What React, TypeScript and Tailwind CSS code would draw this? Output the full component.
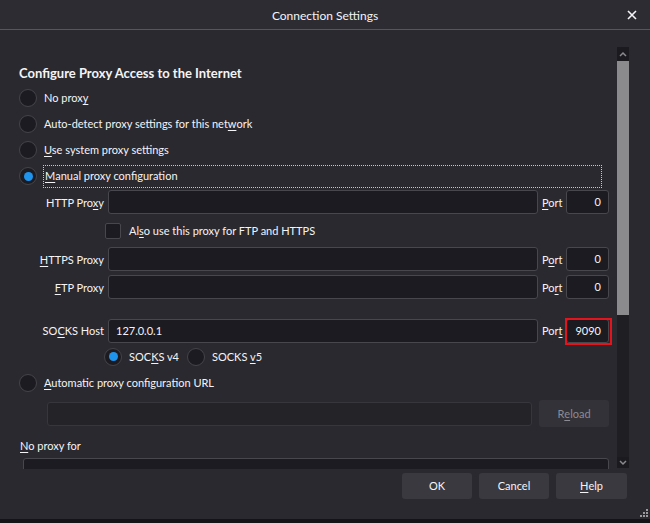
import React from 'react';

const FONT = { fontFamily: 'Lato, "Noto Sans", sans-serif' };

function U({ children }: { children: React.ReactNode }) {
  return <span className="underline underline-offset-2 decoration-1">{children}</span>;
}

function Radio({ checked = false }: { checked?: boolean }) {
  return (
    <span className="flex h-[18px] w-[18px] shrink-0 items-center justify-center rounded-full border border-[#45444b] bg-[#1c1b22]">
      {checked && <span className="h-[9px] w-[9px] rounded-full bg-[#1f94ec]" />}
    </span>
  );
}

function Field({ width, value, align = 'left', disabled = false }: { width: string; value?: string; align?: 'left' | 'right'; disabled?: boolean }) {
  return (
    <div
      className={`${width} h-[24px] flex items-center rounded-[3px] border px-[7px] pt-[1px] ${
        disabled ? 'border-[#37363c] bg-[#242328]' : 'border-[#48474e] bg-[#1c1b22]'
      } ${align === 'right' ? 'justify-end' : ''}`}
    >
      {value}
    </div>
  );
}

function ProxyRow({ label, port, value, red = false }: { label: React.ReactNode; port: React.ReactNode; value?: string; red?: boolean }) {
  return (
    <div className="flex h-[24px] items-center">
      <div className="w-[104px] pt-[2px] text-right">{label}</div>
      <div className="ml-[4px]">
        <Field width="w-[430px]" value={value} />
      </div>
      <div className="ml-[4px] w-[24px] pt-[2px]">{port}</div>
      <div className="relative">
        <Field width="w-[43px]" value={red ? '9090' : '0'} align="right" />
        {red && <div className="absolute -left-[1px] -top-[1px] h-[27px] w-[47px] border-2 border-[#e5141c]" />}
      </div>
    </div>
  );
}

export default function App() {
  return (
    <div className="flex h-[523px] w-[650px] flex-col bg-[#2a292f] text-[11px] text-[#f4f4f6]" style={FONT}>
      <div className="relative flex h-[30px] shrink-0 items-center justify-center border-b border-[#57565c] bg-[#2d2c32] pt-[3px] text-[12px]">
        Connection Settings
        <svg className="absolute right-[13px] top-[10px]" width="10" height="10" viewBox="0 0 10 10">
          <path d="M1 1 L9 9 M9 1 L1 9" stroke="#f4f4f6" strokeWidth="1.6" />
        </svg>
      </div>

      <div className="flex h-[439px] shrink-0">
        <div className="w-[617px] overflow-hidden pt-[34px]">
          <div className="h-[18px] pl-[19px] text-[13px] font-bold leading-[18px]">Configure Proxy Access to the Internet</div>
          <div className="mt-[3px] pl-[19px]">
            <div className="flex h-[26px] items-center gap-[7px]">
              <Radio />
              <span className="pt-[1px]">No prox<U>y</U></span>
            </div>
            <div className="flex h-[26px] items-center gap-[7px]">
              <Radio />
              <span className="pt-[1px]">Auto-detect proxy settings for this net<U>w</U>ork</span>
            </div>
            <div className="flex h-[26px] items-center gap-[7px]">
              <Radio />
              <span className="pt-[1px]"><U>U</U>se system proxy settings</span>
            </div>
            <div className="flex h-[26px] items-center gap-[6px]">
              <Radio checked />
              <span className="flex h-[23px] w-[559px] items-center border border-dotted border-[#c8c8cc] pl-[1px] pt-[1px]"><U>M</U>anual proxy configuration</span>
            </div>
          </div>

          <div className="mt-[1px]">
            <ProxyRow label={<>HTTP Pro<U>x</U>y</>} port={<><U>P</U>ort</>} />
            <div className="flex h-[33px] items-center pl-[105px]">
              <span className="h-[16px] w-[16px] rounded-[2px] border border-[#48474e] bg-[#1c1b22]" />
              <span className="ml-[8px] pt-[1px]">Al<U>s</U>o use this proxy for FTP and HTTPS</span>
            </div>
            <ProxyRow label={<><U>H</U>TTPS Proxy</>} port={<>P<U>o</U>rt</>} />
            <div className="mt-[4px]">
              <ProxyRow label={<><U>F</U>TP Proxy</>} port={<>Po<U>r</U>t</>} />
            </div>
            <div className="mt-[19px] flex h-[25px] items-center">
              <ProxyRow label={<>SO<U>C</U>KS Host</>} port={<>Por<U>t</U></>} value="127.0.0.1" red />
            </div>
            <div className="flex h-[27px] items-center pl-[104px]">
              <Radio checked />
              <span className="ml-[7px] pt-[1px]">SOC<U>K</U>S v4</span>
              <span className="ml-[8px]"><Radio /></span>
              <span className="ml-[7px] pt-[1px]">SOCKS <U>v</U>5</span>
            </div>
          </div>

          <div className="flex h-[26px] items-center gap-[7px] pl-[19px]">
            <Radio />
            <span className="pt-[1px]"><U>A</U>utomatic proxy configuration URL</span>
          </div>
          <div className="mt-[4px] flex h-[27px] items-center pl-[47px]">
            <Field width="w-[485px]" disabled />
            <div className="ml-[7px] flex h-[27px] w-[70px] items-center justify-center rounded-[3px] bg-[#333238] pt-[1px] text-[#8c8b93]">
              R<U>e</U>load
            </div>
          </div>
          <div className="mt-[10px] h-[18px] pl-[20px] leading-[18px]"><U>N</U>o proxy for</div>
          <div className="ml-[23px] mt-[3px] h-[60px] w-[586px] rounded-[3px] border border-[#48474e] bg-[#1c1b22]" />
        </div>

        <div className="mt-[17px] flex h-[421px] w-[12px] flex-col bg-[#1f1e23]">
          <div className="flex h-[14px] items-center justify-center bg-[#1b1a1f]">
            <svg width="8" height="6" viewBox="0 0 8 6">
              <path d="M1 5 L4 2 L7 5" stroke="#8a8a8e" strokeWidth="1.5" fill="none" />
            </svg>
          </div>
          <div className="h-[254px] bg-[#8b8b8d]" />
          <div className="flex-1" />
          <div className="flex h-[11px] items-center justify-center bg-[#1b1a1f]">
            <svg width="8" height="6" viewBox="0 0 8 6">
              <path d="M1 1 L4 4 L7 1" stroke="#8a8a8e" strokeWidth="1.5" fill="none" />
            </svg>
          </div>
        </div>
      </div>

      <div className="relative flex h-[50px] shrink-0 justify-end gap-[7px] pr-[23px] pt-[4px]">
        <div className="flex h-[26px] w-[70px] items-center justify-center rounded-[3px] bg-[#3a393f] pt-[1px]">OK</div>
        <div className="flex h-[26px] w-[70px] items-center justify-center rounded-[3px] bg-[#3a393f] pt-[1px]">Cancel</div>
        <div className="flex h-[26px] w-[71px] items-center justify-center rounded-[3px] bg-[#3a393f] pt-[1px]"><U>H</U>elp</div>
        <svg className="absolute bottom-[2px] right-[2px]" width="8" height="8" viewBox="0 0 8 8">
          <rect x="6" y="0" width="2" height="2" fill="#9a9a9e" />
          <rect x="3" y="3" width="2" height="2" fill="#9a9a9e" />
          <rect x="6" y="3" width="2" height="2" fill="#9a9a9e" />
          <rect x="0" y="6" width="2" height="2" fill="#9a9a9e" />
          <rect x="3" y="6" width="2" height="2" fill="#9a9a9e" />
          <rect x="6" y="6" width="2" height="2" fill="#9a9a9e" />
        </svg>
      </div>
      <div className="h-[4px] shrink-0 bg-[#141417]" />
    </div>
  );
}
